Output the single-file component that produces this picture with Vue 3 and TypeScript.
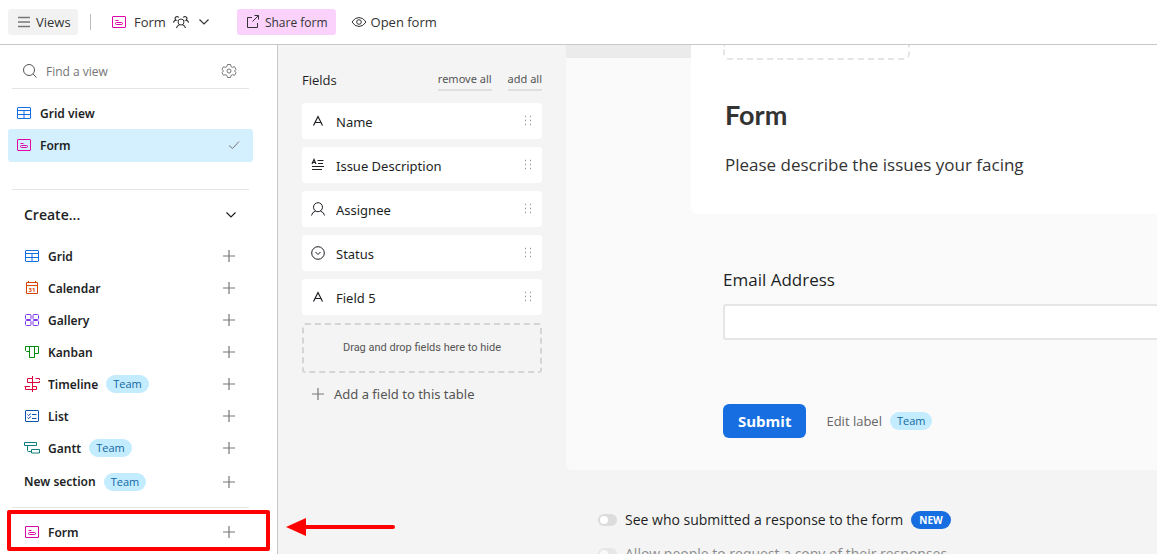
<script setup lang="ts">
import { ref } from 'vue'

interface ViewType {
  label: string
  icon: string
  team?: boolean
}

interface Field {
  label: string
  icon: string
}

const search = ref('')
const email = ref('')
const showSubmitter = ref(false)
const allowCopy = ref(false)

const viewTypes: ViewType[] = [
  { label: 'Grid', icon: 'grid' },
  { label: 'Calendar', icon: 'calendar' },
  { label: 'Gallery', icon: 'gallery' },
  { label: 'Kanban', icon: 'kanban' },
  { label: 'Timeline', icon: 'timeline', team: true },
  { label: 'List', icon: 'list' },
  { label: 'Gantt', icon: 'gantt', team: true },
]

const fields: Field[] = [
  { label: 'Name', icon: 'text' },
  { label: 'Issue Description', icon: 'long-text' },
  { label: 'Assignee', icon: 'person' },
  { label: 'Status', icon: 'status' },
  { label: 'Field 5', icon: 'text' },
]
</script>

<template>
  <div class="app">
    <svg class="sprite" aria-hidden="true">
      <symbol id="menu" viewBox="0 0 16 16"><path d="M2 3.500h12M2 8h12M2 12.500h12" stroke-width="1.400" /></symbol>
      <symbol id="form" viewBox="0 0 16 16">
        <rect x="1.500" y="2.500" width="13" height="11" rx=".5" />
        <path d="M4.500 6.500h3M6 8.500h4.500a1 1 0 0 1 0 2h-5a1 1 0 0 1 0-2h1" />
      </symbol>
      <symbol id="grid" viewBox="0 0 16 16">
        <rect x="1.500" y="2.500" width="13" height="11" rx=".5" />
        <path d="M1.500 5.500h13M1.500 9.500h13M8 5.500v8" />
      </symbol>
      <symbol id="calendar" viewBox="0 0 16 16">
        <path d="M2.500 2.500h11v11h-11zM2.500 5.500h11M4.500 1v2M11.500 1v2" />
        <text x="8" y="12" text-anchor="middle">31</text>
      </symbol>
      <symbol id="gallery" viewBox="0 0 16 16">
        <rect x="1.500" y="2.500" width="5.500" height="5" rx="1" /><rect x="9" y="2.500" width="5.500" height="5" rx="1" />
        <rect x="1.500" y="8.500" width="5.500" height="5" rx="1" /><rect x="9" y="8.500" width="5.500" height="5" rx="1" />
      </symbol>
      <symbol id="kanban" viewBox="0 0 16 16"><path d="M1.500 2.500h13v7h-4M5.500 7.500h-3l-1-1v-4M5.500 2.500v11h5v-11" /></symbol>
      <symbol id="timeline" viewBox="0 0 16 16">
        <path d="M8.500 0v16M8.500 2.500h-5v4h12v-1.500M15.500 4v-1.500h-4M6 10.500h-5.500M1.500 10.500v3h11v-3h-4" />
      </symbol>
      <symbol id="list" viewBox="0 0 16 16">
        <rect x="1.500" y="2.500" width="13" height="11" rx=".5" />
        <path d="M3.500 6.500l1 1 2.500-2M3.500 9.500l1 1 2.500-2M8 6.500h4.500M8 10.500h4.500" />
      </symbol>
      <symbol id="gantt" viewBox="0 0 16 16">
        <path d="M.5 2.500h12v3h-12zM3.500 5.500v5q0 1 1 1h3M7.500 9.500h8v3.500h-8z" />
      </symbol>
      <symbol id="search" viewBox="0 0 16 16"><circle cx="7" cy="7" r="5.500" /><path d="M11 11l3.500 3.500" /></symbol>
      <symbol id="gear" viewBox="0 0 16 16">
        <path d="M6 3.500L6.500 1.500h3L10 3.500l1.500.8 2-.6L15 6.300 13.500 8 15 9.700l-1.500 2.600-2-.6-1.500.8-.5 2h-3l-.5-2-1.500-.8-2 .6L1 9.700 2.500 8 1 6.300l1.500-2.600 2 .6z" />
        <circle cx="8" cy="8" r="2" />
      </symbol>
      <symbol id="people" viewBox="0 0 16 16">
        <circle cx="8" cy="8" r="3" /><path d="M3.500 14q.5-2.500 3-3.300M12.500 14q-.5-2.500-3-3.300M.5 8.500Q1 6.300 3 6.200A2 2 0 1 1 5.800 3.500M15.500 8.500Q15 6.300 13 6.200A2 2 0 1 0 10.200 3.500" stroke-width="1.200" />
      </symbol>
      <symbol id="chevron" viewBox="0 0 16 16"><path d="M3.500 5.500L8 10l4.500-4.500" stroke-width="1.200" /></symbol>
      <symbol id="share" viewBox="0 0 16 16"><path d="M7 3.500H2.500v10h10V9M9.500 1.500h4v4M13.500 1.500l-6 6" /></symbol>
      <symbol id="eye" viewBox="0 0 16 16"><path d="M1 8q2.800-4.500 7-4.500T15 8q-2.800 4.500-7 4.500T1 8z" /><circle cx="8" cy="8" r="2.300" /></symbol>
      <symbol id="check" viewBox="0 0 16 16"><path d="M3 8.500l3.500 3 6.500-7" /></symbol>
      <symbol id="plus" viewBox="0 0 16 16"><path d="M2 8h12M8 2v12" stroke-width="1.200" /></symbol>
      <symbol id="text" viewBox="0 0 16 16"><path d="M3.500 12.500L8 3.500l4.500 9M5 9.500h6" stroke-width="1.200" /></symbol>
      <symbol id="long-text" viewBox="0 0 16 16">
        <path d="M2 7l2-4.500L6 7M3 5.500h2" stroke-width="1.200" /><path d="M7.500 3.500h6M8 6.500h5M2 9.500h12M2 12.500h10" stroke-width="1.200" />
      </symbol>
      <symbol id="person" viewBox="0 0 16 16"><circle cx="8" cy="6.200" r="4.500" /><path d="M1.500 14.500q.5-3.200 4-4.500M14.500 14.500q-.5-3.200-4-4.500" /></symbol>
      <symbol id="status" viewBox="0 0 16 16"><circle cx="8" cy="8" r="6.300" /><path d="M5.500 7l2.500 2.500L10.500 7" /></symbol>
      <symbol id="drag" viewBox="0 0 8 12">
        <path d="M1 1.500h1M1 5.500h1M1 9.500h1M6 1.500h1M6 5.500h1M6 9.500h1" stroke-width="1.400" />
      </symbol>
    </svg>

    <header class="toolbar">
      <button class="tool views" type="button"><svg class="icon muted"><use href="#menu" /></svg>Views</button>
      <span class="divider"></span>
      <button class="tool current" type="button">
        <svg class="icon pink"><use href="#form" /></svg>Form
        <svg class="icon"><use href="#people" /></svg>
        <svg class="icon"><use href="#chevron" /></svg>
      </button>
      <button class="tool share" type="button"><svg class="icon"><use href="#share" /></svg><span>Share form</span></button>
      <button class="tool open" type="button"><svg class="icon"><use href="#eye" /></svg>Open form</button>
    </header>

    <div class="workspace">
      <aside class="sidebar">
        <div class="search">
          <svg class="icon"><use href="#search" /></svg>
          <input v-model="search" type="text" placeholder="Find a view" aria-label="Find a view" />
          <button class="plain" type="button" aria-label="View settings"><svg class="icon muted"><use href="#gear" /></svg></button>
        </div>
        <nav class="views-list" aria-label="Views">
          <a class="view" href="#grid-view"><svg class="icon grid"><use href="#grid" /></svg><span class="label">Grid view</span></a>
          <a class="view selected" href="#form-view" aria-current="page">
            <svg class="icon pink"><use href="#form" /></svg><span class="label">Form</span>
            <svg class="icon tick"><use href="#check" /></svg>
          </a>
        </nav>
        <section class="create">
          <button class="create-head" type="button">Create...<svg class="icon"><use href="#chevron" /></svg></button>
          <button v-for="type in viewTypes" :key="type.label" class="create-row" type="button">
            <svg class="icon" :class="type.icon"><use :href="'#' + type.icon" /></svg>
            <span class="label">{{ type.label }}</span>
            <span v-if="type.team" class="badge">Team</span>
            <svg class="icon add"><use href="#plus" /></svg>
          </button>
          <button class="create-row section-row" type="button">
            <span>New section</span>
            <span class="badge">Team</span>
            <svg class="icon add"><use href="#plus" /></svg>
          </button>
        </section>
        <div class="create-form">
          <button class="create-row" type="button">
            <svg class="icon pink"><use href="#form" /></svg><span class="label">Form</span>
            <svg class="icon add"><use href="#plus" /></svg>
          </button>
          <svg class="arrow" viewBox="0 0 110 20" aria-hidden="true">
            <path class="shaft" d="M16 10h91" /><path class="head" d="M0 10L20 1v18z" />
          </svg>
        </div>
      </aside>

      <main class="editor">
        <section class="fields">
          <div class="fields-head">
            <h2>Fields</h2>
            <button type="button">remove all</button>
            <button type="button">add all</button>
          </div>
          <ul>
            <li v-for="field in fields" :key="field.label">
              <svg class="icon"><use :href="'#' + field.icon" /></svg>
              <span class="label">{{ field.label }}</span>
              <svg class="drag"><use href="#drag" /></svg>
            </li>
          </ul>
          <div class="dropzone">Drag and drop fields here to hide</div>
          <button class="add-field" type="button"><svg class="icon muted"><use href="#plus" /></svg>Add a field to this table</button>
        </section>

        <section class="canvas">
          <form class="preview" @submit.prevent>
            <div class="cover">
              <div class="cover-strip"></div>
              <div class="intro">
                <div class="logo-slot"></div>
                <h1>Form</h1>
                <p>Please describe the issues your facing</p>
              </div>
            </div>
            <div class="questions">
              <label for="email">Email Address</label>
              <input id="email" v-model="email" type="email" />
              <div class="actions">
                <button class="submit" type="submit">Submit</button>
                <button class="edit-label" type="button">Edit label</button>
                <span class="badge">Team</span>
              </div>
            </div>
          </form>
          <div class="options">
            <label><input v-model="showSubmitter" type="checkbox" role="switch" /><span>See who submitted a response to the form</span><b class="new">NEW</b></label>
            <label class="disabled"><input v-model="allowCopy" type="checkbox" role="switch" disabled /><span>Allow people to request a copy of their responses</span></label>
          </div>
        </section>
      </main>
    </div>
  </div>
</template>

<style>
html,
body {
  margin: 0;
  overflow: hidden;
}
</style>

<style scoped>
* {
  box-sizing: border-box;
}
.app {
  display: flex;
  flex-direction: column;
  height: 100vh;
  overflow: hidden;
  background: #fff;
  color: #1d1f25;
  font: 13px/20px "Open Sans", "Noto Sans", sans-serif;
}
button,
input {
  margin: 0;
  padding: 0;
  border: 0;
  background: none;
  color: inherit;
  font: inherit;
  outline: none;
}
button {
  cursor: pointer;
}
.sprite {
  display: none;
}
.icon {
  flex: none;
  width: 16px;
  height: 16px;
  fill: none;
  stroke: currentColor;
}
symbol text {
  fill: currentColor;
  stroke: none;
  font: bold 6px "Open Sans", sans-serif;
}
.label {
  padding-top: 2px;
}
.muted { color: #777; }
.pink { color: #dd04a8; }
.grid { color: #166ee1; }
.calendar { color: #d54401; }
.gallery { color: #7c37ef; }
.kanban { color: #048a0e; }
.timeline { color: #dc043b; }
.list { color: #0d52ac; }
.gantt { color: #0d7f78; }

.toolbar {
  display: flex;
  flex: none;
  align-items: center;
  height: 45px;
  padding: 0 8px;
  border-bottom: 1px solid #c8c8c8;
}
.tool {
  display: flex;
  align-items: center;
  gap: 4px;
  height: 26px;
  padding: 0 8px;
  border-radius: 3px;
  color: #333;
}
.views {
  width: 70px;
  background: #f2f2f2;
}
.divider {
  width: 1px;
  height: 16px;
  margin: 0 12px;
  background: #bbb;
}
.current {
  gap: 7px;
}
.share {
  margin: 0 7px 0 17px;
  background: #fad2fc;
  font-size: 12px;
}
.share span {
  padding-top: 2px;
}
.workspace {
  display: flex;
  flex: 1;
  min-height: 0;
}
.sidebar {
  flex: none;
  width: 278px;
  border-right: 1px solid #c8c8c8;
}
.search {
  display: flex;
  align-items: center;
  gap: 8px;
  height: 44px;
  margin: 0 28px 0 12px;
  padding: 8px 12px 0 10px;
  border-bottom: 1px solid #e5e5e5;
  color: #555;
  font-size: 12px;
}
.search input {
  flex: 1;
  min-width: 0;
  padding-top: 2px;
}
.search input::placeholder {
  color: #757575;
  opacity: 1;
}
.plain {
  display: flex;
}
.views-list {
  padding: 8px 24px 27px 8px;
}
.view {
  display: flex;
  align-items: center;
  gap: 8px;
  height: 32px;
  padding: 0 11px 0 8px;
  border-radius: 3px;
  color: inherit;
  font: 600 12px/20px "Noto Sans", "Open Sans", sans-serif;
  text-decoration: none;
}
.selected {
  height: 33px;
  padding-bottom: 1px;
  background: #d4f0ff;
}
.tick {
  margin-left: auto;
  color: #777;
}
.create {
  margin: 0 28px 0 12px;
  padding: 9px 0 8px;
  border-top: 1px solid #e5e5e5;
  border-bottom: 1px solid #e5e5e5;
}
.create-head {
  display: flex;
  align-items: center;
  justify-content: space-between;
  width: 100%;
  height: 32px;
  margin-bottom: 9px;
  padding: 0 10px 0 12px;
  font-size: 14px;
  font-weight: 600;
}
.create-row {
  display: flex;
  align-items: center;
  gap: 8px;
  width: 100%;
  height: 32px;
  padding: 0 12px;
  font: 600 12px/20px "Noto Sans", "Open Sans", sans-serif;
}
.section-row {
  height: 35px;
}
.add {
  margin-left: auto;
  color: #777;
}
.badge {
  padding: 0 7px;
  border-radius: 9px;
  background: #c4ecff;
  color: #0f68a2;
  font: 400 11px/18px "Open Sans", sans-serif;
}
.create-form {
  position: relative;
  margin: 8px 28px 0 12px;
}
.create-form::after {
  content: "";
  position: absolute;
  inset: -6px -21px -3px -5px;
  border: 4px solid #f00;
  border-radius: 2px;
  pointer-events: none;
}
.arrow {
  position: absolute;
  top: 1px;
  left: 274px;
  z-index: 1;
  width: 110px;
  height: 20px;
}
.shaft {
  stroke: #f00;
  stroke-width: 4;
  stroke-linecap: round;
}
.head {
  fill: #f00;
}
.editor {
  display: flex;
  flex: 1;
  min-width: 0;
  background: #f4f4f4;
}
.fields {
  flex: none;
  width: 288px;
  padding: 24px;
}
.fields-head {
  display: flex;
  align-items: flex-start;
  gap: 16px;
  height: 34px;
}
h2 {
  flex: 1;
  margin: 0;
  font-size: 13px;
  font-weight: 400;
  line-height: 22px;
}
.fields-head button {
  height: 22px;
  border-bottom: 2px solid #e0e0e0;
  color: #555;
  font: 11px/18px "Noto Sans", "Open Sans", sans-serif;
}
ul {
  display: grid;
  gap: 8px;
  margin: 0 0 8px;
  padding: 0;
  list-style: none;
}
li {
  display: flex;
  align-items: center;
  gap: 10px;
  height: 36px;
  padding: 0 10px 0 8px;
  border-radius: 3px;
  background: #fff;
  font-family: "Noto Sans", "Open Sans", sans-serif;
}
.drag {
  width: 8px;
  height: 12px;
  margin-left: auto;
  stroke: #999;
}
.dropzone {
  height: 50px;
  border: 2px dashed #d5d5d5;
  border-radius: 3px;
  color: #555;
  font-family: Roboto, "Open Sans", sans-serif;
  font-size: 11px;
  line-height: 46px;
  text-align: center;
}
.add-field {
  display: flex;
  align-items: center;
  gap: 8px;
  height: 26px;
  margin-top: 8px;
  padding: 0 8px;
  color: #555;
  font-family: "Noto Sans", "Open Sans", sans-serif;
}
.canvas {
  flex: 1;
  min-width: 0;
}
.preview {
  height: 425px;
  border-radius: 0 0 0 6px;
  background: #fafafa;
}
.cover {
  display: flex;
  align-items: flex-start;
}
.cover-strip {
  width: 125px;
  height: 13px;
  background: #ebebeb;
}
.intro {
  flex: 1;
  height: 169px;
  padding-left: 32px;
  border-radius: 0 0 0 6px;
  background: #fff;
}
.logo-slot {
  width: 187px;
  height: 15px;
  border: 2px dashed #e5e5e5;
  border-top: 0;
  border-radius: 0 0 6px 6px;
}
h1 {
  margin: 35px 0 0;
  padding-left: 2px;
  color: #333;
  font: 700 27px/40px Lato, sans-serif;
}
.intro p {
  margin: 16px 0 0;
  padding-left: 2px;
  color: #333;
  font-size: 17px;
  line-height: 28px;
}
.questions {
  padding: 52px 0 0 157px;
}
.questions label {
  display: block;
  font-size: 17px;
  line-height: 28px;
}
.questions input {
  display: block;
  width: 100%;
  height: 36px;
  margin-top: 10px;
  padding: 0 8px;
  border: 2px solid #e5e5e5;
  border-right: 0;
  border-radius: 3px 0 0 3px;
  background: #fff;
}
.actions {
  display: flex;
  align-items: center;
  gap: 8px;
  margin-top: 64px;
}
.submit {
  height: 34px;
  margin-right: 12px;
  padding: 0 15px;
  border-radius: 6px;
  background: #166ee1;
  color: #fff;
  font-size: 15px;
  font-weight: 700;
}
.edit-label {
  color: #666;
}
.options {
  display: grid;
  gap: 14px;
  padding: 40px 0 0 32px;
}
.options label {
  display: flex;
  align-items: center;
  gap: 8px;
  height: 20px;
  font: 500 14px/20px "Open Sans", "Noto Sans", sans-serif;
}
.options input {
  display: flex;
  align-items: center;
  width: 19px;
  height: 12px;
  padding: 2px;
  border-radius: 6px;
  background: #dcdcdc;
  appearance: none;
}
.options input::before {
  content: "";
  width: 8px;
  height: 8px;
  border-radius: 4px;
  background: #fff;
}
.options input:checked {
  justify-content: flex-end;
  background: #048a0e;
}
.new {
  padding: 0 8px;
  border-radius: 9px;
  background: #166ee1;
  color: #fff;
  font-size: 10px;
  font-weight: 700;
  line-height: 18px;
}
.disabled {
  opacity: 0.5;
}
</style>
